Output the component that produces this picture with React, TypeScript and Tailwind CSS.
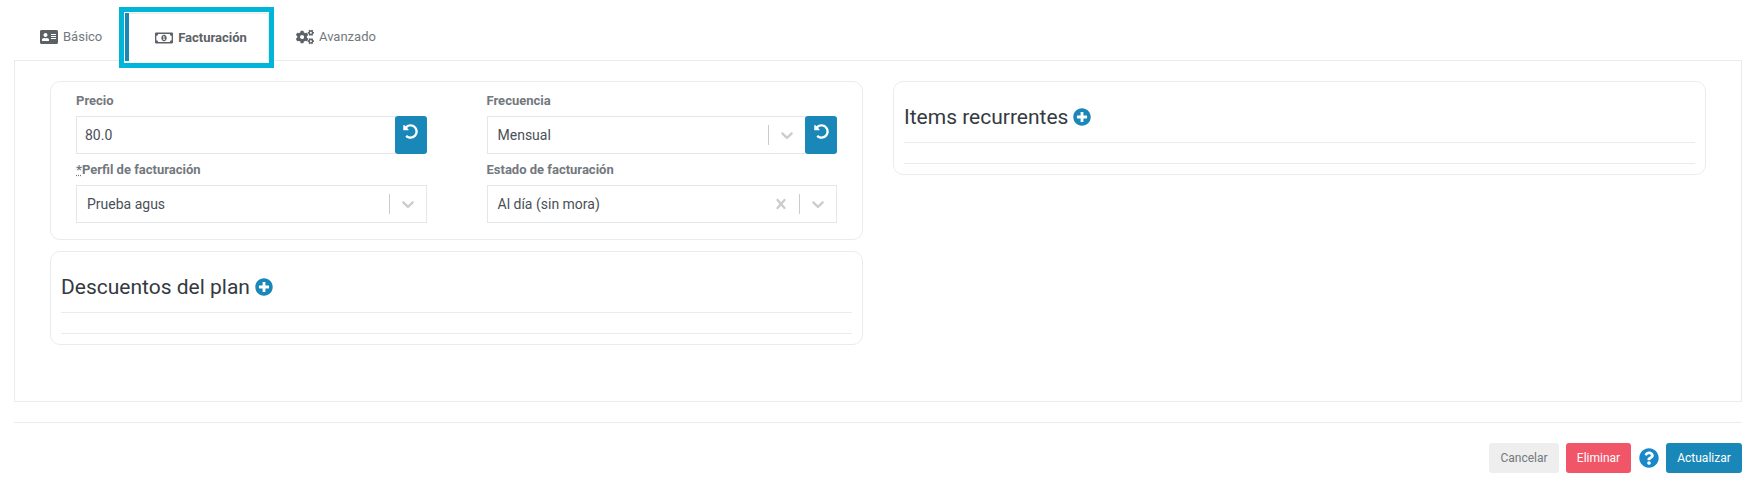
import React from "react";
import { FaAddressCard, FaRegMoneyBillAlt, FaCogs, FaUndoAlt, FaPlusCircle, FaQuestionCircle } from "react-icons/fa";

const chevron = "M4.516 7.548c0.436-0.446 1.043-0.481 1.576 0l3.908 3.747 3.908-3.747c0.533-0.481 1.141-0.446 1.576 0 0.436 0.445 0.408 1.197 0 1.615-0.406 0.418-4.695 4.502-4.695 4.502-0.217 0.223-0.502 0.335-0.789 0.335s-0.572-0.112-0.79-0.335c0 0-4.287-4.084-4.695-4.502s-0.436-1.17 0-1.615z";
const cross = "M14.348 14.849c-0.469 0.469-1.229 0.469-1.697 0l-2.651-3.030-2.651 3.029c-0.469 0.469-1.229 0.469-1.697 0-0.469-0.469-0.469-1.229 0-1.697l2.758-3.15-2.759-3.152c-0.469-0.469-0.469-1.228 0-1.697s1.228-0.469 1.697 0l2.652 3.031 2.651-3.031c0.469-0.469 1.228-0.469 1.697 0s0.469 1.229 0 1.697l-2.758 3.152 2.758 3.15c0.469 0.469 0.469 1.229 0 1.697z";

function Glyph({ d }: { d: string }) {
    return (
        <svg viewBox="0 0 20 20" className="w-5 h-5 fill-[#cccccc]">
            <path d={d} />
        </svg>
    );
}

function ResetButton() {
    return (
        <button className="w-8 h-[38px] -ml-px shrink-0 flex items-start pt-[8px] justify-center rounded-[3px] bg-[#1a87b9] text-white relative">
            <FaUndoAlt size={15} />
        </button>
    );
}

function SelectBox({ value, clearable }: { value: string; clearable?: boolean }) {
    return (
        <div className="flex-1 h-[38px] flex items-center border border-[#e4e7ea] bg-white text-[14px] text-[#495057]">
            <span className="flex-1 pl-[10px]">{value}</span>
            {clearable && <span className="w-9 flex justify-center"><Glyph d={cross} /></span>}
            <span className="w-px h-5 bg-[#cccccc]" />
            <span className="w-9 flex justify-center"><Glyph d={chevron} /></span>
        </div>
    );
}

function ListCard({ title }: { title: string }) {
    return (
        <div className="border border-[#e9ecef] rounded-[10px] px-[10px] pt-[21px] pb-[10px] bg-white">
            <div className="flex items-center gap-[5px] h-[30px] text-[21px] text-[#343a40]">
                {title}
                <FaPlusCircle size={18} className="-mt-0.5 text-[#1a87b9]" />
            </div>
            <div className="mt-[9px] h-[22px] border-y border-[#e9ecef]" />
        </div>
    );
}

export default function App() {
    return (
        <div className="w-[1759px] h-[493px] bg-white pl-[14px] pr-[17px] font-['Roboto',sans-serif] text-[13px] text-[#73787e]">
            <div className="flex h-[60px] items-start pl-[26px] relative z-10">
                <div className="flex items-center gap-[5px] w-[79px] h-[60px] pt-[13px]">
                    <FaAddressCard size={18} className="text-[#5c6166]" />
                    Básico
                </div>
                <div className="mt-[7px] w-[155px] h-[61px] border-[5px] border-[#00b5d8] bg-white flex pl-px pt-px pb-[2px]">
                    <div className="w-1 shrink-0 bg-[#1a87b9]" />
                    <div className="flex-1 flex items-center justify-center gap-[5px] pl-[5px] border-t border-r border-[#e9ecef] font-bold text-[#5c6166]">
                        <FaRegMoneyBillAlt size={18} />
                        Facturación
                    </div>
                </div>
                <div className="flex items-center gap-[5px] ml-[22px] h-[60px] pt-[13px]">
                    <FaCogs size={18} className="text-[#5c6166]" />
                    Avanzado
                </div>
            </div>

            <div className="h-[342px] border border-[#e9ecef] pl-[35px] pr-[35px] pt-[20px] grid grid-cols-2 gap-x-[30px] items-start">
                <div className="flex flex-col gap-[11px]">
                    <div className="border border-[#e9ecef] rounded-[10px] pl-[25px] pr-[25px] pt-[10px] pb-[16px] grid grid-cols-2 gap-x-[60px] bg-white">
                        <div>
                            <label className="block h-[24px] pt-px leading-[16px] font-bold">Precio</label>
                            <div className="flex">
                                <div className="flex-1 h-[38px] flex items-center pl-2 border border-[#e4e7ea] text-[14px] text-[#495057]">80.0</div>
                                <ResetButton />
                            </div>
                        </div>
                        <div>
                            <label className="block h-[24px] pt-px leading-[16px] font-bold">Frecuencia</label>
                            <div className="flex">
                                <SelectBox value="Mensual" />
                                <ResetButton />
                            </div>
                        </div>
                        <div className="mt-[7px]">
                            <label className="block h-[24px] pt-px leading-[16px] font-bold">
                                <span className="underline decoration-dotted">*</span>Perfil de facturación
                            </label>
                            <div className="flex"><SelectBox value="Prueba agus" /></div>
                        </div>
                        <div className="mt-[7px]">
                            <label className="block h-[24px] pt-px leading-[16px] font-bold">Estado de facturación</label>
                            <div className="flex"><SelectBox value="Al día (sin mora)" clearable /></div>
                        </div>
                    </div>
                    <ListCard title="Descuentos del plan" />
                </div>
                <ListCard title="Items recurrentes" />
            </div>

            <div className="mt-5 border-t border-[#e9ecef] pt-5 flex justify-end items-center text-[12px]">
                <button className="w-[70px] h-[30px] rounded-[3px] bg-[#eeeeee] text-[#73787e]">Cancelar</button>
                <button className="ml-[7px] w-[65px] h-[30px] rounded-[3px] bg-[#f15668] text-white">Eliminar</button>
                <FaQuestionCircle size={20} className="ml-2 text-[#1a87c9]" />
                <button className="ml-[7px] w-[76px] h-[30px] rounded-[3px] bg-[#1a87b9] text-white">Actualizar</button>
            </div>
        </div>
    );
}
